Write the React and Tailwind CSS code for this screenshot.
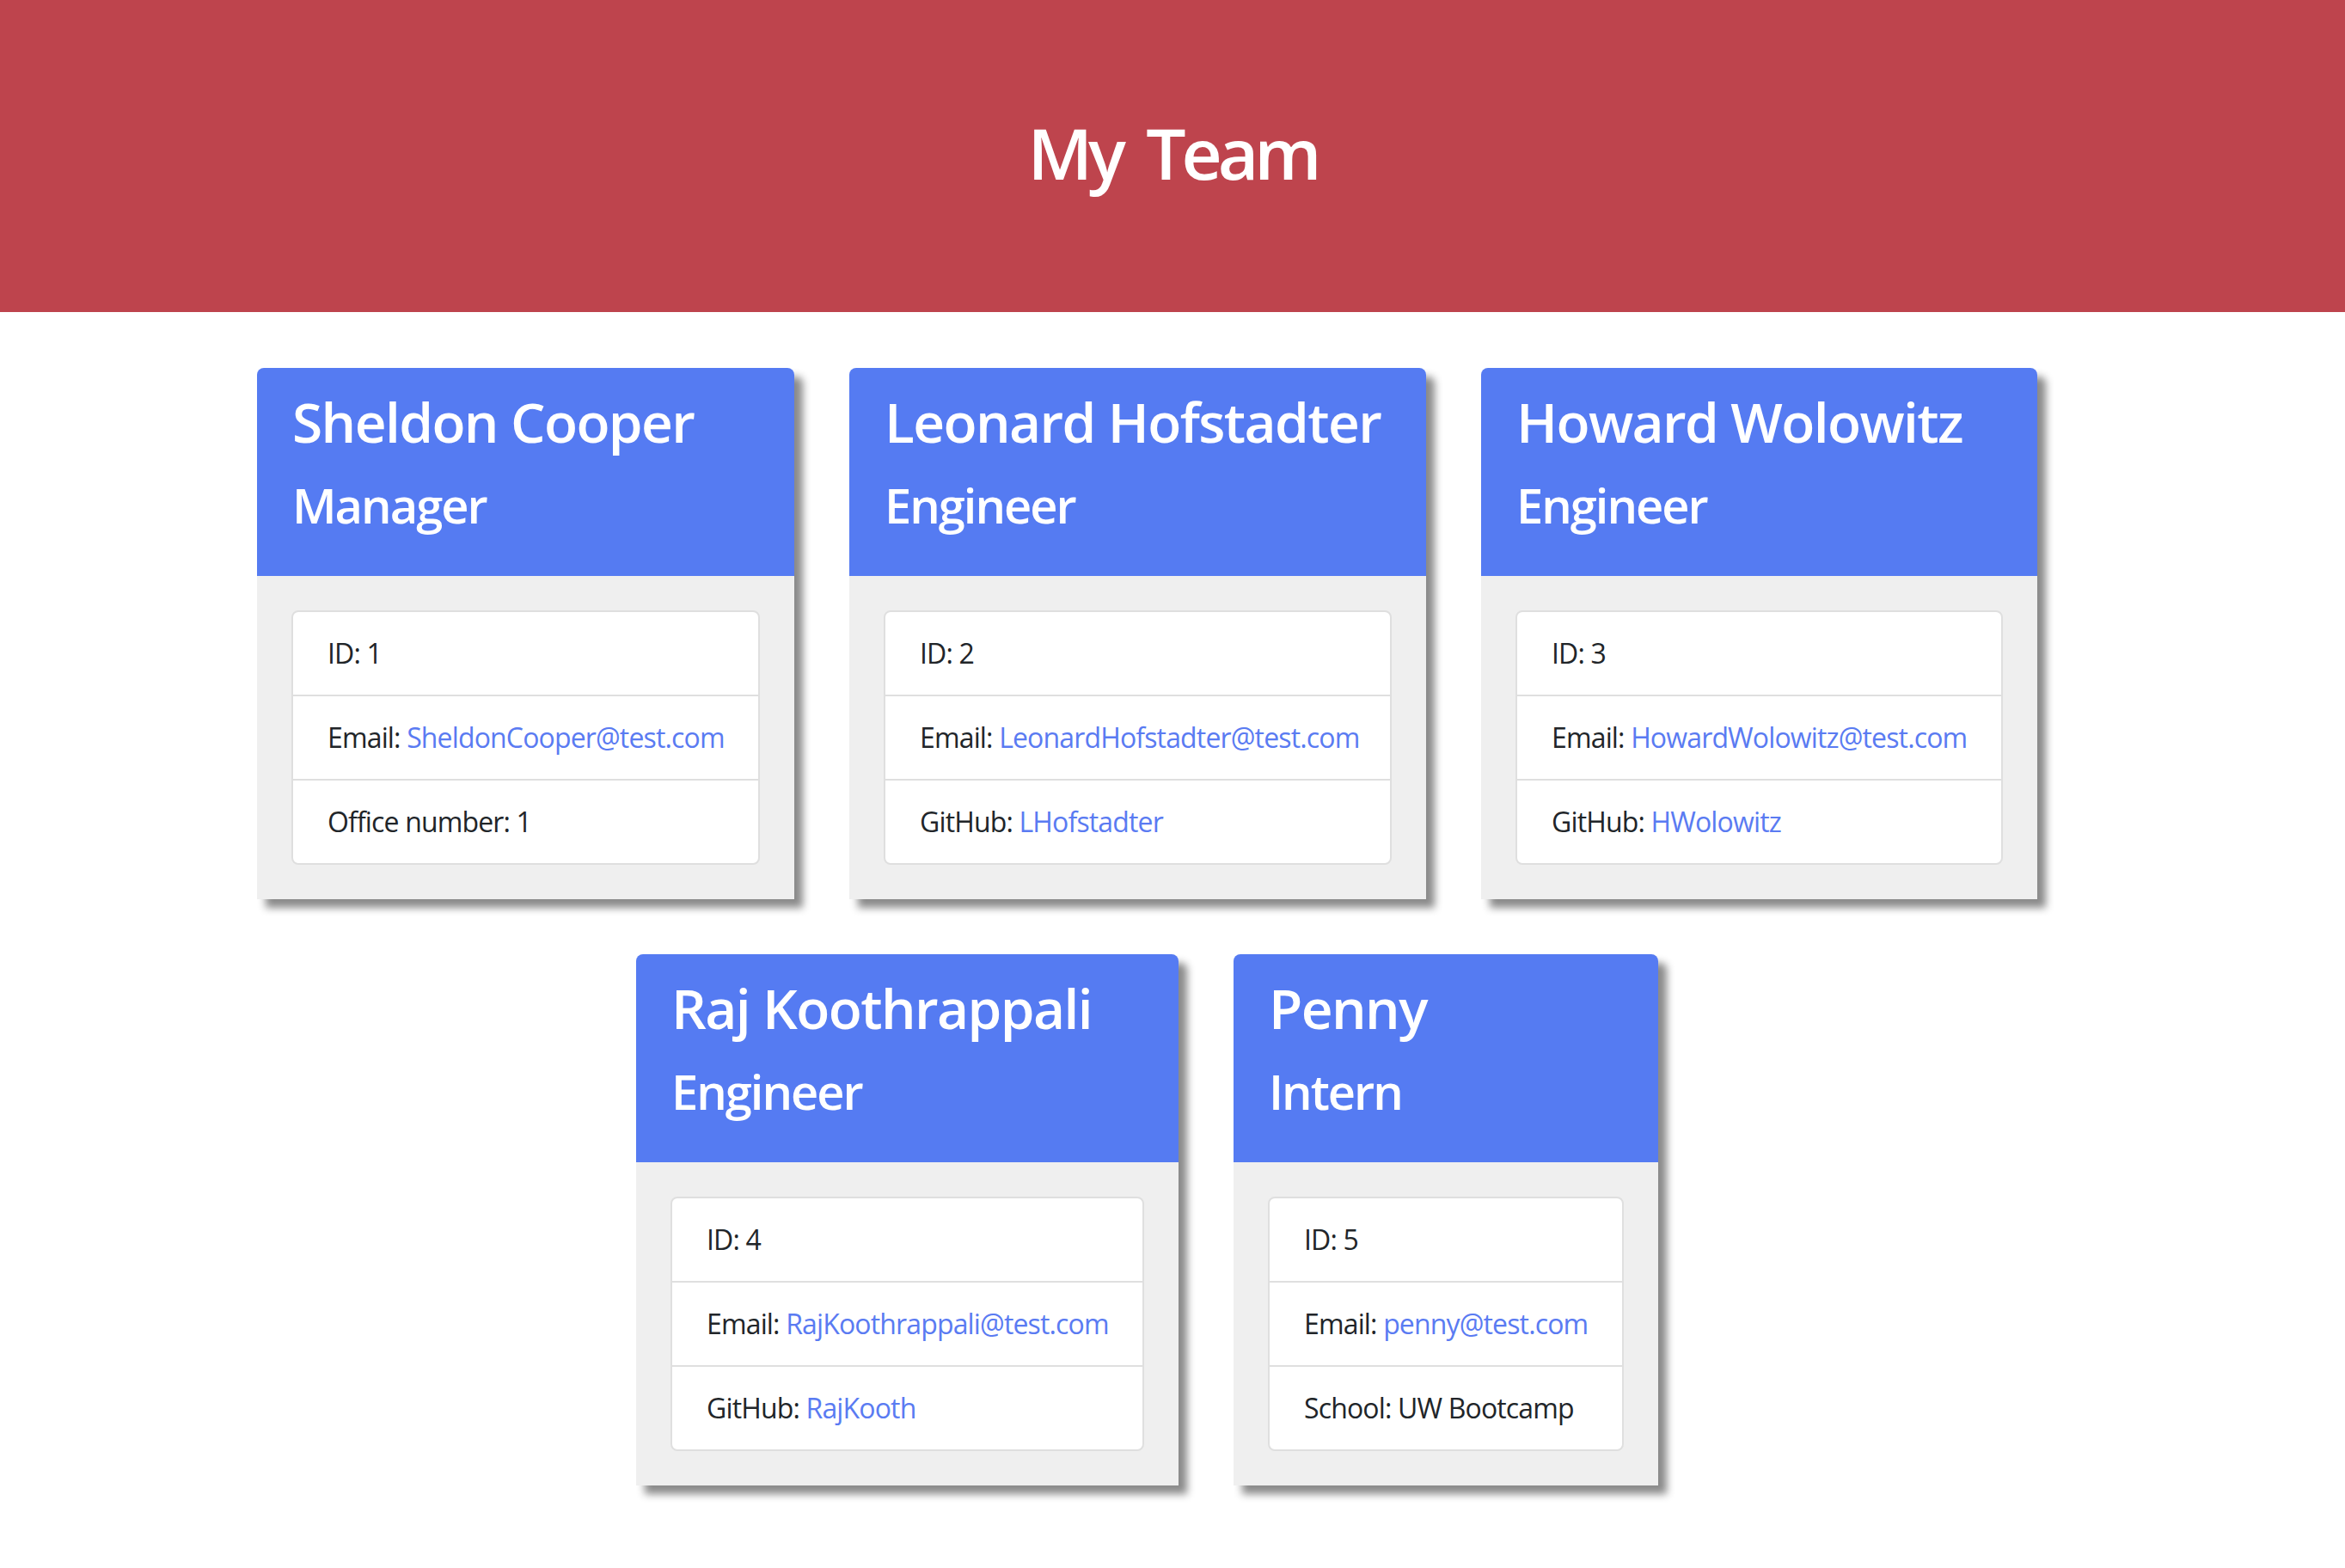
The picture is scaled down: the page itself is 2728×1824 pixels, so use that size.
import React from 'react';

const team = [
  {
    name: 'Sheldon Cooper',
    role: 'Manager',
    id: 1,
    email: 'SheldonCooper@test.com',
    extra: { label: 'Office number', value: '1' },
    width: 'w-[625px]',
  },
  {
    name: 'Leonard Hofstadter',
    role: 'Engineer',
    id: 2,
    email: 'LeonardHofstadter@test.com',
    extra: { label: 'GitHub', value: 'LHofstadter', link: true },
    width: 'w-[671px]',
  },
  {
    name: 'Howard Wolowitz',
    role: 'Engineer',
    id: 3,
    email: 'HowardWolowitz@test.com',
    extra: { label: 'GitHub', value: 'HWolowitz', link: true },
    width: 'w-[647px]',
  },
  {
    name: 'Raj Koothrappali',
    role: 'Engineer',
    id: 4,
    email: 'RajKoothrappali@test.com',
    extra: { label: 'GitHub', value: 'RajKooth', link: true },
    width: 'w-[631px]',
  },
  {
    name: 'Penny',
    role: 'Intern',
    id: 5,
    email: 'penny@test.com',
    extra: { label: 'School', value: 'UW Bootcamp' },
    width: 'w-[494px]',
  },
];

const App = () => {
  return (
    <div className="min-h-screen bg-white font-['Open_Sans',sans-serif] text-[#212529]">
      <header className="h-[363px] bg-[#be444d] pt-[136px] text-center">
        <h1 className="text-[82px] leading-none font-semibold text-white tracking-[-5px] [word-spacing:12px]">My Team</h1>
      </header>

      <main className="mt-[65px] flex flex-wrap justify-center pl-[5px]">
        {team.map((member) => (
          <EmployeeCard key={member.id} member={member} />
        ))}
      </main>
    </div>
  );
};

const EmployeeCard = ({ member }) => (
  <div className={`${member.width} mr-[64px] mb-[64px] rounded-t-[8px] shadow-[10px_10px_10px_#8a8a8a]`}>
    <div className="rounded-t-[8px] bg-[#557bf2] px-[41px] pt-[25px] pb-[25px] text-white">
      <h2 className="mb-[24px] text-[64px] leading-[76.8px] font-semibold whitespace-nowrap tracking-[-1.6px]">{member.name}</h2>
      <h3 className="mb-[24px] text-[56px] leading-[67.2px] font-semibold whitespace-nowrap tracking-[-2px]">{member.role}</h3>
    </div>
    <div className="bg-[#efefef] p-[40px]">
      <ul className="rounded-[8px] border-2 border-[#dfdfdf] bg-white divide-y-2 divide-[#dfdfdf] text-[32px] leading-[48px] whitespace-nowrap tracking-[-0.85px]">
        <li className="px-[40px] py-[24px]">ID: {member.id}</li>
        <li className="px-[40px] py-[24px]">
          Email: <a href={`mailto:${member.email}`} className="text-[#5a7bf2]">{member.email}</a>
        </li>
        <li className="px-[40px] py-[24px]">
          {member.extra.label}:{' '}
          {member.extra.link ? (
            <a href={`https://github.com/${member.extra.value}`} className="text-[#5a7bf2]">{member.extra.value}</a>
          ) : (
            member.extra.value
          )}
        </li>
      </ul>
    </div>
  </div>
);

export default App;
